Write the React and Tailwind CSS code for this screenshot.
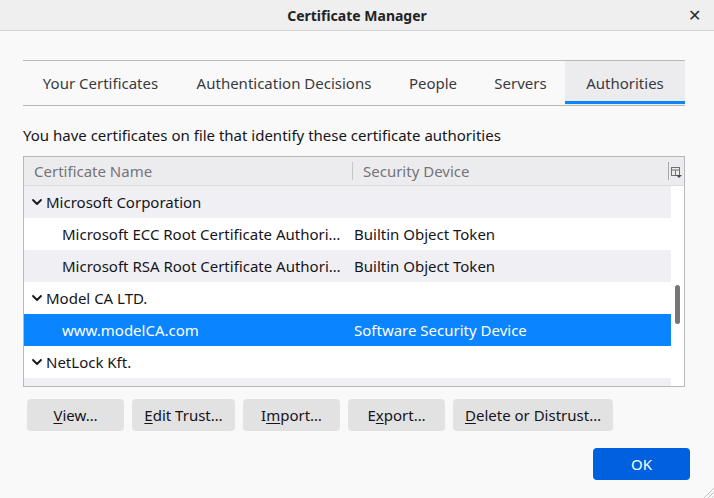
import { useState } from 'react';

const TABS = [
  { label: 'Your Certificates', width: 'w-[155px]' },
  { label: 'Authentication Decisions', width: 'w-[212px]' },
  { label: 'People', width: 'w-[86px]' },
  { label: 'Servers', width: 'w-[89px]' },
  { label: 'Authorities', width: 'w-[120px]' },
];

const ROWS = [
  { kind: 'group', name: 'Microsoft Corporation', device: '' },
  { kind: 'item', name: 'Microsoft ECC Root Certificate Authori…', device: 'Builtin Object Token' },
  { kind: 'item', name: 'Microsoft RSA Root Certificate Authori…', device: 'Builtin Object Token' },
  { kind: 'group', name: 'Model CA LTD.', device: '' },
  { kind: 'item', name: 'www.modelCA.com', device: 'Software Security Device', selected: true },
  { kind: 'group', name: 'NetLock Kft.', device: '' },
  { kind: 'item', name: '', device: '' },
];

const Chevron = ({ color }) => (
  <svg width="12" height="12" viewBox="0 0 12 12" className="shrink-0">
    <path d="M2 4 L6 8 L10 4" fill="none" stroke={color} strokeWidth="1.8" strokeLinecap="round" strokeLinejoin="round" />
  </svg>
);

const ColumnPicker = () => (
  <svg width="11" height="11" viewBox="0 0 11 11">
    <rect x="0.5" y="0.5" width="8" height="8" fill="none" stroke="#6f6f6f" />
    <line x1="0.5" y1="3" x2="8.5" y2="3" stroke="#6f6f6f" />
    <line x1="4.5" y1="3" x2="4.5" y2="8.5" stroke="#6f6f6f" />
    <path d="M5 8 L11 8 L8 11 Z" fill="#4a4a4a" />
  </svg>
);

const Button = ({ label, accessKey, className }) => {
  const i = label.indexOf(accessKey);
  return (
    <button className={`h-8 rounded-[4px] bg-[#e2e2e2] text-[#15141a] text-[15px] ${className}`}>
      {label.slice(0, i)}
      <span className="underline underline-offset-2">{accessKey}</span>
      {label.slice(i + 1)}
    </button>
  );
};

const App = () => {
  const [activeTab] = useState('Authorities');

  return (
    <div className="w-[714px] h-[498px] bg-[#f9f9f9] flex flex-col text-[#15141a] overflow-hidden relative" style={{ fontFamily: '"Noto Sans", sans-serif' }}>
      {/* Title bar */}
      <div className="h-[31px] shrink-0 bg-[#efefef] border-b border-[#d6d6d6] flex items-center justify-center relative">
        <span className="font-bold text-[14px] text-[#232323]">Certificate Manager</span>
        <span className="absolute right-[13px] top-[7px] text-[16px] leading-none text-[#2a2a2a]">✕</span>
      </div>

      <div className="px-[23px] flex flex-col">
        {/* Tabs */}
        <div className="mt-[29px] w-[662px] h-[46px] border-t border-b border-[#b8b8b8] flex">
          {TABS.map(tab => (
            <div
              key={tab.label}
              className={`${tab.width} shrink-0 h-full flex items-center justify-center whitespace-nowrap text-[15px] text-[#3a3a40] relative ${tab.label === activeTab ? 'bg-[#ececee]' : ''}`}
            >
              {tab.label}
              {tab.label === activeTab && <div className="absolute left-0 right-0 bottom-[1px] h-[3px] bg-[#0a84ff]" />}
            </div>
          ))}
        </div>

        <div className="mt-[19px] text-[15px] leading-[20px]">You have certificates on file that identify these certificate authorities</div>

        {/* Tree */}
        <div className="mt-[11px] w-[662px] h-[231px] border border-[#b8b8b8] bg-white flex flex-col overflow-hidden">
          <div className="h-[29px] shrink-0 bg-[#ececee] border-b border-[#dcdcdc] flex items-center text-[15px] text-[#74747a]">
            <div className="w-[328px] pl-[10px] flex items-center">Certificate Name</div>
            <div className="w-px h-[18px] bg-[#c6c6c6]" />
            <div className="flex-1 pl-[10px]">Security Device</div>
            <div className="w-px h-[18px] bg-[#a8a8a8]" />
            <div className="w-[15px] flex justify-center pt-[2px]"><ColumnPicker /></div>
          </div>
          <div className="flex flex-1 min-h-0">
            <div className="w-[647px] flex flex-col">
              {ROWS.map((row, idx) => (
                <div
                  key={idx}
                  className={`h-[32px] shrink-0 flex items-center text-[15px] ${row.selected ? 'bg-[#0a84ff] text-white' : idx % 2 === 0 ? 'bg-[#f0f0f4]' : 'bg-white'}`}
                >
                  <div className="w-[330px] flex items-center whitespace-nowrap overflow-hidden">
                    {row.kind === 'group' ? (
                      <div className="flex items-center pl-[7px] gap-[3px]"><Chevron color="#15141a" />{row.name}</div>
                    ) : (
                      <div className="pl-[38px]">{row.name}</div>
                    )}
                  </div>
                  <div className="whitespace-nowrap">{row.device}</div>
                </div>
              ))}
            </div>
            <div className="flex-1 bg-white relative">
              <div className="absolute left-[4px] top-[99px] w-[5px] h-[39px] rounded-full bg-[#767676]" />
            </div>
          </div>
        </div>

        {/* Action buttons */}
        <div className="mt-[12px] flex gap-[8px] pl-[4px]">
          <Button label="View…" accessKey="V" className="w-[97px]" />
          <Button label="Edit Trust…" accessKey="E" className="w-[103px]" />
          <Button label="Import…" accessKey="m" className="w-[97px]" />
          <Button label="Export…" accessKey="x" className="w-[97px]" />
          <Button label="Delete or Distrust…" accessKey="D" className="w-[160px]" />
        </div>

        <div className="mt-[17px] flex justify-end pr-[1px]">
          <button className="w-[97px] h-8 rounded-[4px] bg-[#0061e0] text-white text-[15px]">OK</button>
        </div>
      </div>

      {/* Resize grip */}
      <svg className="absolute right-0 bottom-0" width="14" height="14" viewBox="0 0 14 14">
        <line x1="4" y1="14" x2="14" y2="4" stroke="#c4c4c4" />
        <line x1="8" y1="14" x2="14" y2="8" stroke="#c4c4c4" />
        <line x1="12" y1="14" x2="14" y2="12" stroke="#c4c4c4" />
      </svg>
    </div>
  );
};

export default App;
